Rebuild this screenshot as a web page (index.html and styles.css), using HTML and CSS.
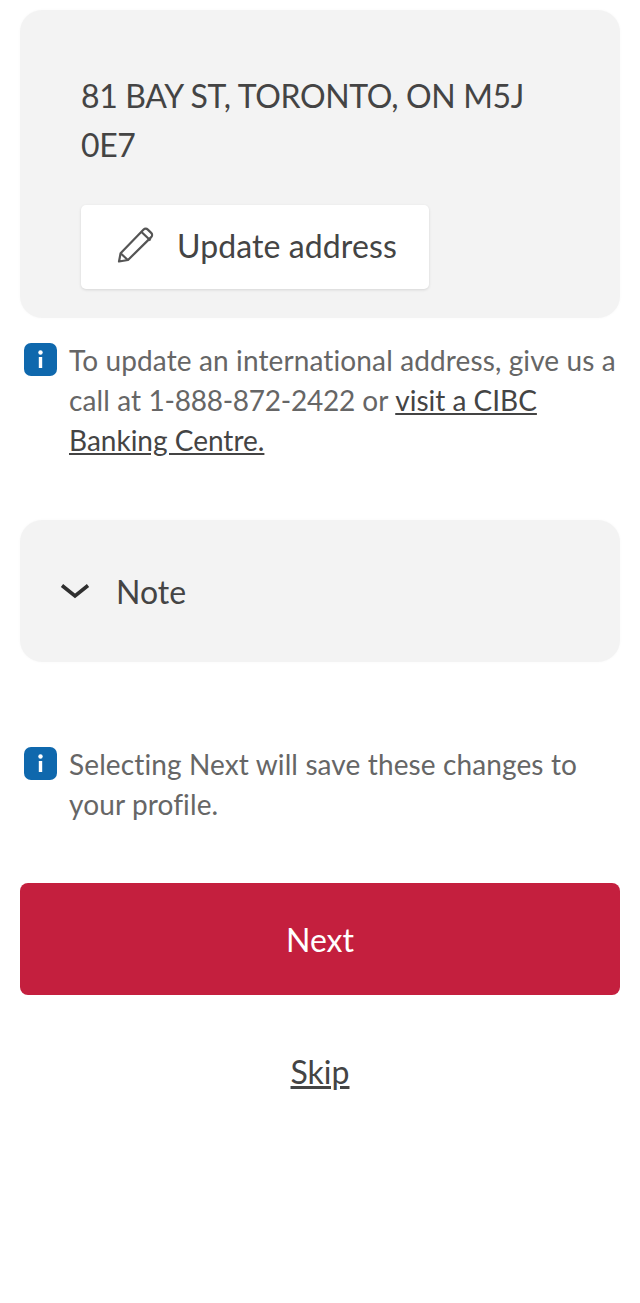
FILE: index.html
```html
<!DOCTYPE html>
<html lang="en">

<head>
  <meta charset="UTF-8">
  <meta name="viewport" content="width=device-width, initial-scale=1">
  <title>Update address</title>
  <link rel="stylesheet" href="styles.css">
</head>

<body>
  <div class="card address-card">
    <p class="address">81 BAY ST, TORONTO, ON M5J 0E7</p>
    <button class="update-btn" type="button">
      <svg class="pencil" width="38" height="38" viewBox="0 0 38 38" fill="none" stroke="#555" stroke-width="2.2" stroke-linejoin="round">
        <path d="M2 35.5l1.6-8.2L26.6 3.6c1.2-1.2 3-1.2 4.2 0l3.4 3.3c1.200 1.200 1.200 3 0 4.200L11 34z" />
        <path d="M24.500 6l9 8.500M3.600 27.300L10.800 34" />
      </svg>
      <span class="update-label">Update address</span>
    </button>
  </div>

  <div class="info first-info">
    <svg class="info-icon" width="33" height="33" viewBox="0 0 33 33">
      <rect width="33" height="33" rx="7" fill="#0f68ad" />
      <circle cx="16.500" cy="9.500" r="2.200" fill="#fff" />
      <rect x="14.800" y="14" width="3.400" height="11" fill="#fff" />
    </svg>
    <p>To update an international address, give us a call at <span class="phone">1-888-872-2422</span> or <a href="#">visit a CIBC Banking Centre.</a></p>
  </div>

  <div class="card note-card">
    <svg class="chevron" width="30" height="16" viewBox="0 0 30 16" fill="none" stroke="#2f2f2f" stroke-width="3.600">
      <path d="M2 2.500l13 10.500L28 2.500" />
    </svg>
    <span>Note</span>
  </div>

  <div class="info second-info">
    <svg class="info-icon" width="33" height="33" viewBox="0 0 33 33">
      <rect width="33" height="33" rx="7" fill="#0f68ad" />
      <circle cx="16.500" cy="9.500" r="2.200" fill="#fff" />
      <rect x="14.800" y="14" width="3.400" height="11" fill="#fff" />
    </svg>
    <p>Selecting Next will save these changes to your profile.</p>
  </div>

  <button class="next-btn" type="button">Next</button>
  <div class="skip"><a href="#">Skip</a></div>
</body>

</html>
```

FILE: styles.css
```css
* {
  box-sizing: border-box;
}

body {
  margin: 0;
  padding: 10px 20px 0 20px;
  font-family: "Lato", "Open Sans", sans-serif;
  font-variant-ligatures: none;
  color: #444;
  background-color: #fff;
}

.card {
  background-color: #f3f3f3;
  border-radius: 22px;
  box-shadow: 0 0 3px rgba(0, 0, 0, 0.03);
}

.address-card {
  height: 308px;
  padding: 61px 60px 0 61px;
}

.address {
  margin: 0;
  font-size: 32px;
  line-height: 49px;
  letter-spacing: -0.35px;
}

.update-btn {
  display: flex;
  align-items: center;
  gap: 22px;
  width: 348px;
  height: 84px;
  margin-top: 36px;
  padding: 0 0 0 36px;
  border: 0;
  border-radius: 5px;
  background-color: #fff;
  box-shadow: 0 1px 3px rgba(0, 0, 0, 0.12);
  font-family: inherit;
  font-size: 32px;
  color: #444;
}

.pencil {
  margin-bottom: 4px;
}

.update-label {
  margin-bottom: 3px;
  letter-spacing: 0.1px;
}

.info {
  display: flex;
  gap: 12px;
  color: #666;
  font-size: 28px;
  line-height: 40px;
  letter-spacing: 0.12px;
}

.info p {
  margin: 0;
  flex: 1;
}

.info a {
  color: #444;
  letter-spacing: 0;
}

.phone {
  letter-spacing: -0.25px;
}

.info-icon {
  flex: none;
  margin: 3px 0 0 4px;
}

.first-info {
  margin-top: 22px;
}

.note-card {
  display: flex;
  align-items: center;
  gap: 26px;
  height: 142px;
  margin-top: 60px;
  padding-left: 40px;
  font-size: 32px;
  color: #444;
}

.second-info {
  margin-top: 82px;
}

.next-btn {
  display: block;
  width: 100%;
  height: 112px;
  margin-top: 59px;
  border: 0;
  border-radius: 8px;
  background-color: #c41f3e;
  color: #fff;
  font-family: inherit;
  font-size: 32px;
}

.skip {
  margin-top: 55px;
  text-align: center;
  font-size: 32px;
  line-height: 44px;
}

.skip a {
  color: #444;
}
```
